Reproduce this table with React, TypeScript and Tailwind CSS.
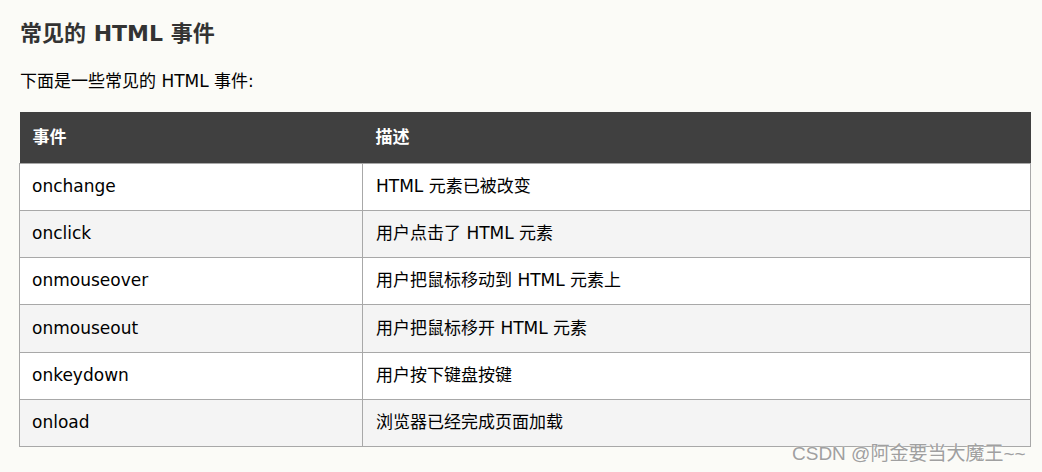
const rows: [string, string][] = [
  ["onchange", "HTML 元素已被改变"],
  ["onclick", "用户点击了 HTML 元素"],
  ["onmouseover", "用户把鼠标移动到 HTML 元素上"],
  ["onmouseout", "用户把鼠标移开 HTML 元素"],
  ["onkeydown", "用户按下键盘按键"],
  ["onload", "浏览器已经完成页面加载"],
];

export default function App() {
  return (
    <div className="w-[1042px] h-[472px] bg-[#fbfbf7] font-['DejaVu_Sans','Noto_Sans_CJK_SC',sans-serif] relative overflow-hidden">
      <div className="pl-[20px] pr-[11px] pt-[19px]">
        <h2 className="text-[22px] leading-[30px] font-bold text-[#333]">常见的 HTML 事件</h2>
        <p className="mt-[19px] text-[17px] leading-[26px] text-black">下面是一些常见的 HTML 事件:</p>
        <table className="mt-[18px] ml-[-1px] w-[1012px] border-collapse text-[17px] text-black">
          <thead>
            <tr className="h-[51px] bg-[#404040] text-white">
              <th className="w-[343px] pl-[13px] text-left font-bold">事件</th>
              <th className="pl-[13px] text-left font-bold">描述</th>
            </tr>
          </thead>
          <tbody>
            {rows.map(([ev, desc], i) => (
              <tr key={ev} className={i % 2 === 0 ? "h-[47.3px] bg-white" : "h-[47.3px] bg-[#f4f4f4]"}>
                <td className="border border-[#a8a8a8] pl-[12px]">{ev}</td>
                <td className="border border-[#a8a8a8] pl-[13px]">{desc}</td>
              </tr>
            ))}
          </tbody>
        </table>
      </div>
      <div className="absolute left-[792px] top-[442px] text-[19px] leading-[24px] text-[#a0a0a0] font-['Liberation_Sans','Noto_Sans_CJK_SC',sans-serif] [text-shadow:0_0_2px_#fff]">
        CSDN @阿金要当大魔王~~
      </div>
    </div>
  );
}
